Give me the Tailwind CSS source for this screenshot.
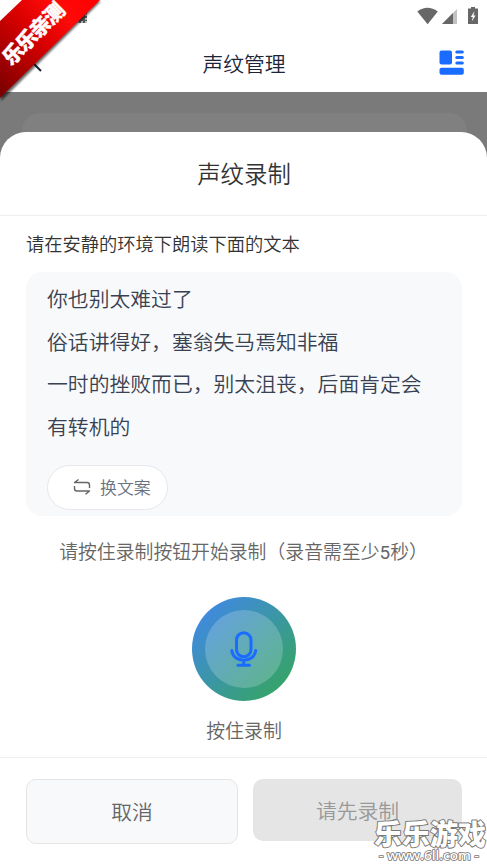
<!DOCTYPE html>
<html lang="zh-CN">
<head>
<meta charset="utf-8">
<title>声纹管理</title>
<script src="https://cdn.jsdelivr.net/npm/@tailwindcss/browser@4"></script>
</head>
<body class="bg-white">
<div class="relative flex h-[865px] w-[487px] flex-col overflow-hidden bg-white font-['Roboto','Noto_Sans_CJK_SC',sans-serif] font-[350]">
  <!-- status bar -->
  <div class="flex h-[33px] shrink-0 items-start justify-end pr-[8px]">
    <div class="mr-auto ml-[77px] mt-[11px] h-[12px] w-[10px] border-2 border-dotted border-[#bbb] bg-[#555]"></div>
    <svg class="mt-[7px]" width="62" height="18" viewBox="417 7 62 18">
      <path d="M417.300 11.500Q427.500 4 437.800 11.500L427.600 24.300Z" fill="#676767"/>
      <path d="M457 9V24H442Z" fill="#c2c2c2"/>
      <path d="M453 13V24H442Z" fill="#676767"/>
      <path d="M471 7H475V8.500H478V24H468V8.500H471Z" fill="#676767"/>
      <path d="M474.500 11L470.800 17H472.800L471.800 21.500L475.600 15.500H473.500Z" fill="#fff"/>
    </svg>
  </div>
  <!-- title bar -->
  <header class="flex h-[59px] shrink-0 items-center justify-between pr-[23px] pl-[29px]">
    <svg width="14" height="20" viewBox="0 0 14 20" fill="none" stroke="#1d2437" stroke-width="2"><path d="M12 2L4 10L12 18"/></svg>
    <h1 class="relative top-[2px] left-[3px] text-[20.8px] leading-[30px] font-[350] text-[#1d2437]">声纹管理</h1>
    <svg width="25" height="25" viewBox="0 0 25 25" fill="#196cff">
      <rect x=".5" y=".5" width="12.500" height="14" rx="2"/>
      <rect x="16.300" y=".5" width="8.500" height="3" rx="1.500"/><rect x="16.300" y="6" width="8.500" height="3" rx="1.500"/><rect x="16.300" y="11.500" width="8.500" height="3" rx="1.500"/>
      <rect x=".5" y="17.800" width="24.300" height="7" rx="2"/>
    </svg>
  </header>
  <!-- dimmed page behind the sheet -->
  <main class="flex flex-1 flex-col bg-[linear-gradient(#7a7a7a_0_80px,#fff_80px)] pt-[21px]">
    <div class="mr-[20px] ml-[22px] h-[60px] shrink-0 rounded-[18px] bg-[#808080]"></div>
    <section class="-mt-[41.500px] flex flex-1 flex-col rounded-t-[26px] bg-white">
      <h2 class="flex h-[84.500px] shrink-0 items-center justify-center border-b border-[#eee] pt-[4px] pl-px text-[23.4px] font-[350] text-[#333]">声纹录制</h2>
      <p class="mt-[15px] ml-[26px] h-[28px] text-[18.250px] leading-[28px] text-[#333]">请在安静的环境下朗读下面的文本</p>
      <div class="mr-[25px] ml-[26px] mt-[13px] h-[244px] rounded-[16px] bg-[#f8f9fb] px-[21px] pt-[7px]">
        <p class="text-[20.820px] leading-[42.700px] text-[#374151]">你也别太难过了<br>俗话讲得好，塞翁失马焉知非福<br>一时的挫败而已，别太沮丧，后面肯定会<br>有转机的</p>
        <button class="mt-[15px] flex h-[45px] w-[121px] items-center rounded-full border border-[#e5e7eb] bg-white pt-[2px] pl-[25px] text-[16.900px] text-[#6b7280]">
          <svg class="mr-[9px] -mt-[3px]" width="18" height="18" viewBox="0 0 18 18" fill="none" stroke="#666" stroke-width="1.400" stroke-linejoin="round"><path d="M5.500 1.500L1.500 4.500H14Q16.500 4.500 16.500 7V10M1.500 8V10.500Q1.500 13 4 13H16.500L12.500 16.300"/></svg>
          换文案
        </button>
      </div>
      <p class="mt-[23px] h-[28px] text-center text-[18.850px] leading-[28px] text-[#666]">请按住录制按钮开始录制（录音需至少<span class="font-normal">5</span>秒）</p>
      <div class="mx-auto mt-[29.500px] flex h-[104px] w-[104px] items-center justify-center rounded-full bg-[linear-gradient(135deg,#4285f4,#34a853)]">
        <div class="flex h-[78px] w-[78px] items-center justify-center rounded-full bg-white/20">
          <svg width="28" height="36" viewBox="0 0 28 36" fill="none" stroke="#196cff" stroke-width="3" stroke-linecap="round"><rect x="6.500" y="1.700" width="14.500" height="24" rx="7.250"/><path d="M1.800 19.500C2.800 32.500 24.700 32.500 25.700 19.500M13.750 29.500V34.300M8 34.300H19.500"/></svg>
        </div>
      </div>
      <p class="mt-[17px] h-[28px] pl-px text-center text-[18.900px] leading-[28px] text-[#666]">按住录制</p>
      <footer class="mt-[11.500px] flex gap-[15px] border-t border-[#eee] pr-[25px] pl-[26px] pt-[21px]">
        <button class="h-[65px] w-[212px] rounded-[10px] border border-[#e5e5e5] bg-[#f8f9fb] pt-[5px] text-[20.800px] text-[#666]">取消</button>
        <button class="h-[62px] flex-1 rounded-[10px] bg-[#e5e5e5] pt-[6px] text-[20.800px] text-[#999]">请先录制</button>
      </footer>
    </section>
  </main>

  <!-- corner ribbon -->
  <svg class="absolute top-0 left-0" width="106" height="106" viewBox="0 0 106 106">
    <defs>
      <linearGradient id="r" x1="0" y1="0" x2="98" y2="0" gradientUnits="userSpaceOnUse" gradientTransform="translate(0 98) rotate(-45) scale(1.414 1)"><stop offset="0" stop-color="#760000"/><stop offset=".5" stop-color="#d80000"/><stop offset=".75" stop-color="#ff0a0a"/><stop offset="1" stop-color="#f00"/></linearGradient>
      <filter id="b"><feGaussianBlur stdDeviation="1.300"/></filter>
    </defs>
    <path d="M23 3L101 1L1 101V24Z" fill="#000" opacity=".6" filter="url(#b)"/>
    <path d="M22 0H100L0 98V21Z" fill="url(#r)"/>
    <text transform="translate(33.500 33.500) rotate(-45)" text-anchor="middle" y="7.500" font-family="Noto Sans CJK SC" font-size="20.500" font-weight="900" fill="#fff" stroke="#fff" stroke-width=".4" textLength="78">乐乐亲测</text>
  </svg>
  <!-- watermark -->
  <svg class="absolute top-[810px] left-[367px]" width="120" height="55" viewBox="0 0 120 55" fill="#fff" stroke="#777" paint-order="stroke" stroke-linejoin="round">
    <text x="7" y="34.500" font-family="Noto Sans CJK SC" font-size="28" font-weight="900" stroke-width="2" textLength="112">乐乐游戏</text>
    <text x="12" y="50" font-family="Open Sans" font-weight="600" font-size="13" stroke-width="1.600" textLength="100" lengthAdjust="spacingAndGlyphs">- www.6ll.com -</text>
  </svg>
</div>
</body>
</html>
